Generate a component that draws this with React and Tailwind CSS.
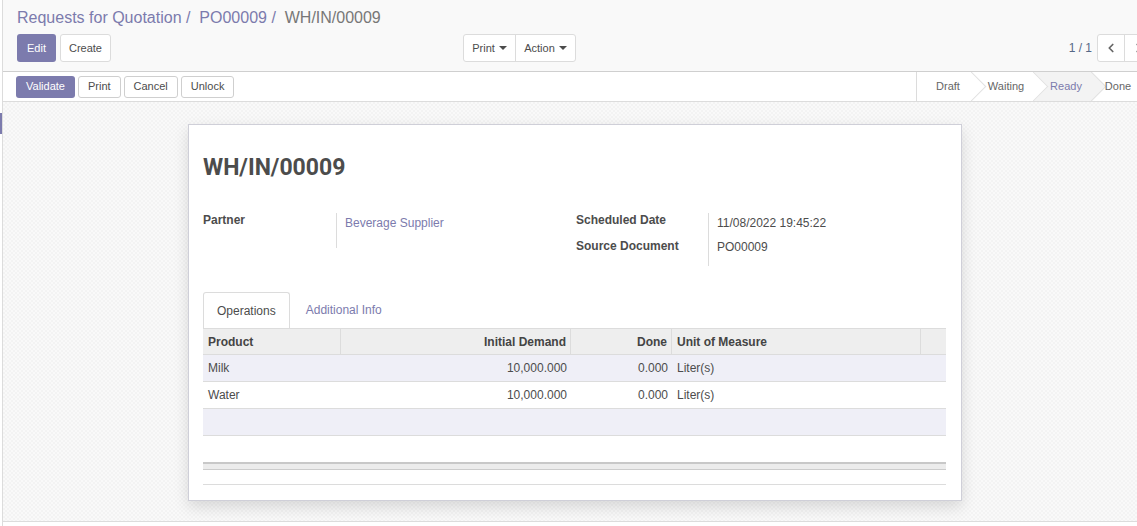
import { ChevronLeft, ChevronRight } from "lucide-react";

const Caret = () => (
  <span className="ml-[4px] inline-block w-0 h-0 border-t-[4px] border-t-[#4c4c4c] border-x-[4px] border-x-transparent align-middle" />
);

const steps = [
  { name: "Draft", w: "w-[54px]" },
  { name: "Waiting", w: "w-[62px]" },
  { name: "Ready", w: "w-[58px]", active: true },
  { name: "Done", w: "w-[46px]", last: true },
];

const StatusStep = ({ step }) => (
  <div
    className={`relative h-full flex items-center justify-center ${step.w} ${
      step.active ? "bg-[#f3f3f3] text-[#7c7bad]" : "text-[#666]"
    } text-[11px] font-medium`}
  >
    <span className="relative z-20 pl-[8px]">{step.name}</span>
    {!step.last && (
      <span
        className={`absolute z-10 right-[-11px] top-[4px] w-[21px] h-[21px] rotate-45 border-t border-r border-[#e2e2e2] ${
          step.active ? "bg-[#f3f3f3]" : "bg-white"
        }`}
      />
    )}
  </div>
);

const rows = [
  { product: "Milk", demand: "10,000.000", done: "0.000", uom: "Liter(s)", shade: true },
  { product: "Water", demand: "10,000.000", done: "0.000", uom: "Liter(s)" },
];

export default function App() {
  return (
    <div className="w-[1137px] h-[526px] overflow-hidden flex bg-white text-[12px] text-[#4c4c4c] font-['Liberation_Sans',Arial,sans-serif]">
      {/* left strip */}
      <div className="relative w-[2px] shrink-0">
        <div className="absolute left-0 top-[113px] w-[2px] h-[21px] bg-[#7c7bad]" />
      </div>

      <div className="flex-1 flex flex-col border-l border-[#dcdcdc]">
        {/* control panel */}
        <div className="h-[72px] bg-[#f9f9f9] border-b border-[#cfcfcf] pl-[14px] pt-[6px]">
          <div className="text-[16px] leading-[24px] whitespace-pre">
            <span className="text-[#7c7bad]">Requests for Quotation /  PO00009 /  </span>
            <span className="text-[#777]">WH/IN/00009</span>
          </div>
          <div className="flex items-center mt-[4px] text-[11px]">
            <div className="flex gap-[4px] w-[446px]">
              <button className="h-[28px] px-[10px] rounded-[3px] bg-[#7c7bad] text-white">Edit</button>
              <button className="h-[28px] px-[8px] rounded-[3px] bg-white border border-[#dcdcdc] text-[#4c4c4c]">
                Create
              </button>
            </div>
            <div className="flex h-[28px] border border-[#dcdcdc] rounded-[3px] bg-white">
              <button className="w-[52px] flex items-center justify-center border-r border-[#dcdcdc]">
                Print
                <Caret />
              </button>
              <button className="w-[59px] flex items-center justify-center">
                Action
                <Caret />
              </button>
            </div>
            <div className="flex-1 flex items-center justify-end gap-[5px] mr-[-16px]">
              <span className="text-[12px] text-[#566887]">1 / 1</span>
              <div className="flex h-[28px] border border-[#dcdcdc] rounded-[3px] bg-white">
                <span className="w-[27px] flex items-center justify-center border-r border-[#dcdcdc] text-[#666]">
                  <ChevronLeft size={14} strokeWidth={3} />
                </span>
                <span className="w-[27px] flex items-center justify-center text-[#666]">
                  <ChevronRight size={14} strokeWidth={3} />
                </span>
              </div>
            </div>
          </div>
        </div>

        {/* statusbar */}
        <div className="h-[30px] bg-white border-b border-[#dcdcdc] flex items-center justify-between pl-[13px]">
          <div className="flex gap-[3px] text-[11px]">
            <button className="h-[22px] px-[10px] rounded-[3px] bg-[#7c7bad] text-white">Validate</button>
            {["Print", "Cancel", "Unlock"].map((b) => (
              <button
                key={b}
                className="h-[22px] px-[9px] rounded-[3px] bg-white border border-[#cfcfcf] text-[#4c4c4c]"
              >
                {b}
              </button>
            ))}
          </div>
          <div className="h-full flex border-l border-[#dcdcdc] overflow-hidden">
            {steps.map((s) => (
              <StatusStep key={s.name} step={s} />
            ))}
          </div>
        </div>

        {/* content */}
        <div className="h-[420px] border-b border-[#dcdcdc] bg-[repeating-conic-gradient(#f3f3f3_0_25%,#f9f9f9_0_50%)] bg-[length:4px_4px] pt-[22px]">
          <div className="ml-[185px] w-[774px] h-[377px] bg-white border border-[#cfcfd8] shadow-[0_6px_14px_rgba(0,0,0,0.13)] px-[14px]">
            <h1 className="mt-[28px] text-[23px] leading-[30px] font-bold font-['Roboto',Arial,sans-serif] text-[#4c4c4c]">
              WH/IN/00009
            </h1>

            {/* groups */}
            <div className="flex mt-[30px]">
              <div className="w-[373px] flex items-start">
                <div className="w-[134px] h-[35px] border-r border-[#dcdcdc] font-bold text-[12px] leading-[15px]">
                  Partner
                </div>
                <div className="pl-[8px] pt-[3px] text-[#7c7bad] leading-[15px]">Beverage Supplier</div>
              </div>
              <div className="flex items-start">
                <div className="w-[133px] h-[53px] border-r border-[#dcdcdc] font-bold leading-[15px] flex flex-col gap-[11px]">
                  <span>Scheduled Date</span>
                  <span>Source Document</span>
                </div>
                <div className="pl-[8px] pt-[3px] leading-[15px] flex flex-col gap-[9px] text-[#4c4c4c]">
                  <span>11/08/2022 19:45:22</span>
                  <span>PO00009</span>
                </div>
              </div>
            </div>

            {/* tabs */}
            <div className="flex items-end mt-[26px] h-[36px]">
              <div className="h-[36px] px-[13px] flex items-center border border-b-0 border-[#dcdcdc] rounded-t-[3px] bg-white text-[#4c4c4c]">
                Operations
              </div>
              <div className="h-[36px] px-[16px] flex items-center text-[#7c7bad]">Additional Info</div>
            </div>

            {/* table */}
            <div className="w-[743px]">
              <div className="flex h-[27px] bg-[#eeeeee] border-y border-[#dcdcdc] font-bold text-[#444]">
                <div className="w-[138px] px-[5px] flex items-center border-r border-[#dcdcdc]">Product</div>
                <div className="w-[230px] px-[4px] flex items-center justify-end border-r border-[#dcdcdc]">
                  Initial Demand
                </div>
                <div className="w-[101px] px-[4px] flex items-center justify-end border-r border-[#dcdcdc]">Done</div>
                <div className="w-[249px] px-[5px] flex items-center border-r border-[#dcdcdc]">Unit of Measure</div>
                <div className="flex-1" />
              </div>
              {rows.map((r) => (
                <div
                  key={r.product}
                  className={`flex h-[27px] border-b border-[#dcdcdc] ${r.shade ? "bg-[#efeff7]" : "bg-white"}`}
                >
                  <div className="w-[138px] px-[5px] flex items-center">{r.product}</div>
                  <div className="w-[230px] px-[4px] flex items-center justify-end">{r.demand}</div>
                  <div className="w-[101px] px-[4px] flex items-center justify-end">{r.done}</div>
                  <div className="w-[249px] px-[5px] flex items-center">{r.uom}</div>
                </div>
              ))}
              <div className="h-[27px] bg-[#efeff7] border-b border-[#dcdcdc]" />

              <div className="mt-[26px] h-[8px] bg-[#ececec] border-t-2 border-[#c8c8c8] border-b border-b-[#cccccc]" />
              <div className="mt-[14px] h-px bg-[#dcdcdc]" />
            </div>
          </div>
        </div>
      </div>
    </div>
  );
}
